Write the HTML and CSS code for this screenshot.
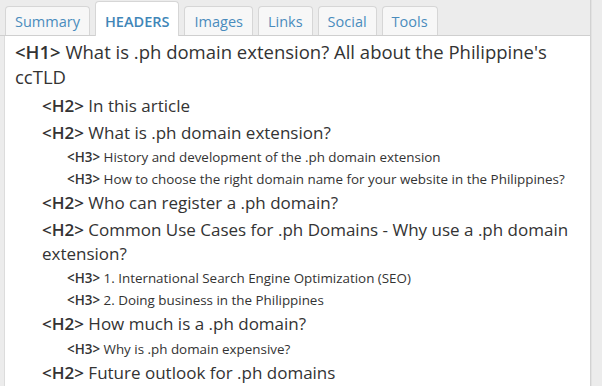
FILE: index.html
```html
<!DOCTYPE html>
<html lang="en">
<head>
    <meta charset="UTF-8">
    <meta name="viewport" content="width=device-width, initial-scale=1.0">
    <title>Headers</title>
    <link rel="stylesheet" href="styles.css">
</head>
<body>
    <div class="page">
        <div class="main">
            <!-- tabs -->
            <div class="tabs">
                <div class="tab">Summary</div>
                <div class="tab active">HEADERS</div>
                <div class="tab">Images</div>
                <div class="tab">Links</div>
                <div class="tab">Social</div>
                <div class="tab">Tools</div>
            </div>

            <!-- headers list -->
            <div class="panel">
                <div class="h1"><b>&lt;H1&gt;</b> What is .ph domain extension? All about the Philippine's ccTLD</div>
                <div class="h2"><b>&lt;H2&gt;</b> In this article</div>
                <div class="h2"><b>&lt;H2&gt;</b> What is .ph domain extension?</div>
                <div class="h3"><b>&lt;H3&gt;</b> History and development of the .ph domain extension</div>
                <div class="h3"><b>&lt;H3&gt;</b> How to choose the right domain name for your website in the Philippines?</div>
                <div class="h2"><b>&lt;H2&gt;</b> Who can register a .ph domain?</div>
                <div class="h2"><b>&lt;H2&gt;</b> Common Use Cases for .ph Domains - Why use a .ph domain extension?</div>
                <div class="h3"><b>&lt;H3&gt;</b> 1. International Search Engine Optimization (SEO)</div>
                <div class="h3"><b>&lt;H3&gt;</b> 2. Doing business in the Philippines</div>
                <div class="h2"><b>&lt;H2&gt;</b> How much is a .ph domain?</div>
                <div class="h3"><b>&lt;H3&gt;</b> Why is .ph domain expensive?</div>
                <div class="h2"><b>&lt;H2&gt;</b> Future outlook for .ph domains</div>
            </div>
        </div>
        <div class="side"></div>
    </div>
</body>
</html>
```

FILE: styles.css
```css
html, body{margin: 0; height: 100%;}
body{background-color: #ececec; font-family: "Open Sans", "Noto Sans", sans-serif; color: #333; overflow: hidden;}

.page{display: flex; height: 386px;}
.main{width: 590px; border-right: 1px solid #d2d2d2; display: flex; flex-direction: column;}
.side{flex: 1; border-left: 1px solid #e2e2e2; background-color: #ececec;}

.tabs{display: flex; align-items: flex-end; gap: 5px; padding-left: 5px; height: 37px; border-bottom: 1px solid #cfcfcf; box-sizing: border-box;}
.tab{height: 29px; box-sizing: border-box; padding: 3px 9px 0; font-size: 14.5px; line-height: 24px; color: #4a8cbd; background-color: #f7f7f7; border: 1px solid #d6d6d6; border-bottom: none; border-radius: 4px 4px 0 0;}
.tab.active{height: 35px; padding-top: 8px; background-color: #fff; font-weight: 600; color: #3f86b8; margin-bottom: -1px;}

.panel{flex: 1; background-color: #fff; border-left: 1px solid #dcdcdc; margin-left: 4px; padding: 3px 10px 0;}
.panel b{font-weight: 600;}
.h1{font-size: 18.5px; line-height: 25px; padding-bottom: 4px;}
.h2{font-size: 17px; line-height: 24px; padding: 1px 0 1.5px 27px;}
.h3{font-size: 13.4px; line-height: 22px; padding-left: 52px;}
```
